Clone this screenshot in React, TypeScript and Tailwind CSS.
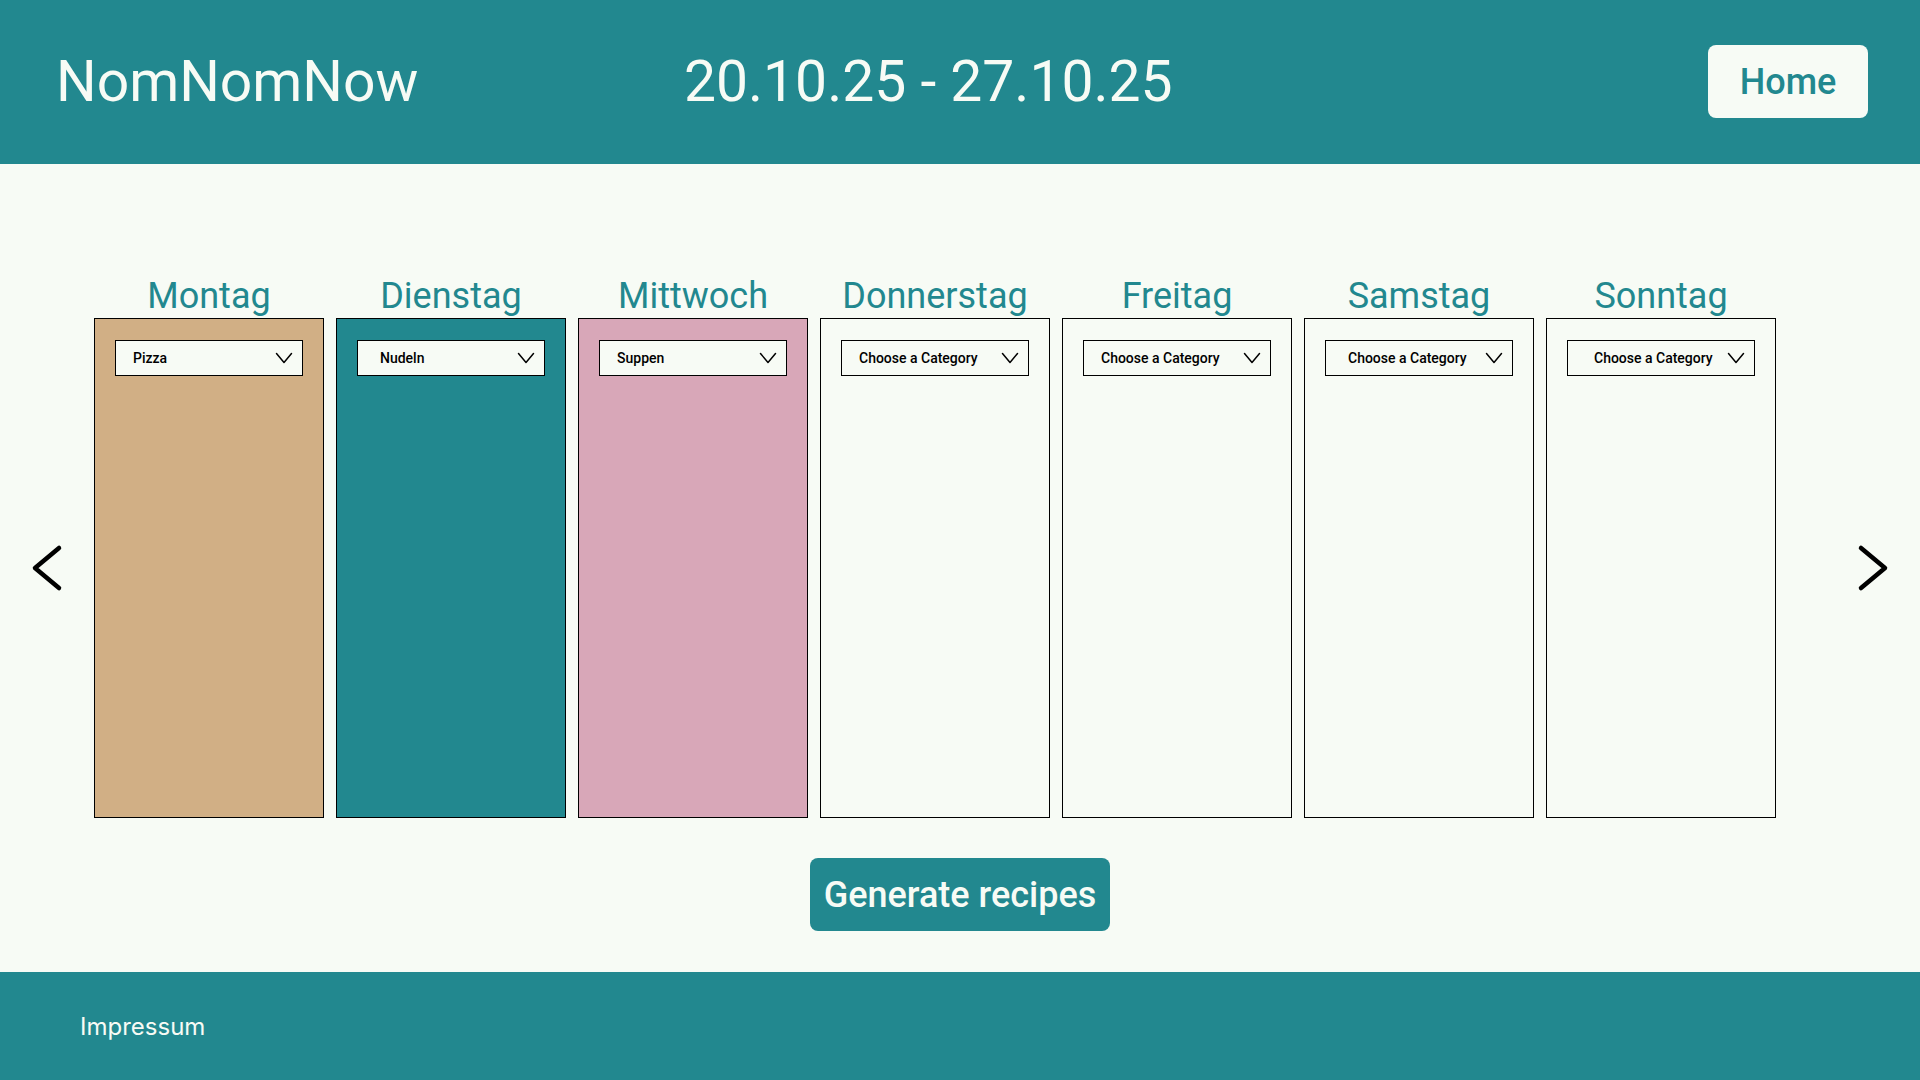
import React from "react";

type Day = {
  name: string;
  category: string;
  card: string;
  indent: string;
};

const PLACEHOLDER = "Choose a Category";
const CATEGORIES = [PLACEHOLDER, "Pizza", "Nudeln", "Suppen"];

const DAYS: Day[] = [
  { name: "Montag", category: "Pizza", card: "bg-[#d1af85]", indent: "pl-[17px]" },
  { name: "Dienstag", category: "Nudeln", card: "bg-[#22888f]", indent: "pl-[22px]" },
  { name: "Mittwoch", category: "Suppen", card: "bg-[#d8a7b8]", indent: "pl-[17px]" },
  { name: "Donnerstag", category: PLACEHOLDER, card: "bg-transparent", indent: "pl-[17px]" },
  { name: "Freitag", category: PLACEHOLDER, card: "bg-transparent", indent: "pl-[17px]" },
  { name: "Samstag", category: PLACEHOLDER, card: "bg-transparent", indent: "pl-[22px]" },
  { name: "Sonntag", category: PLACEHOLDER, card: "bg-transparent", indent: "pl-[26px]" },
];

function Arrow({ path }: { path: string }) {
  return (
    <svg className="overflow-visible" width="28" height="44" viewBox="0 0 28 44" fill="none" stroke="black" strokeWidth="4.5" strokeLinecap="round" strokeLinejoin="round" aria-hidden="true">
      <path d={path} />
    </svg>
  );
}

function DayColumn({ day }: { day: Day }) {
  const id = `category-${day.name.toLowerCase()}`;
  return (
    <div className="flex min-w-0 flex-1 flex-col">
      <label htmlFor={id} className="text-center text-4xl leading-[44px] text-[#22888f]">
        {day.name}
      </label>
      <div className={`flex-1 border border-black px-5 pt-[21px] ${day.card}`}>
        <div className="relative">
          <select
            id={id}
            defaultValue={day.category}
            className={`block h-9 w-full appearance-none border border-black bg-[#f7fbf5] pr-8 text-sm font-medium text-black ${day.indent}`}
          >
            {CATEGORIES.map((category) => (
              <option key={category}>{category}</option>
            ))}
          </select>
          <svg className="pointer-events-none absolute top-3 right-2.5" width="18" height="12" viewBox="0 0 18 12" fill="none" stroke="black" strokeWidth="1.5" strokeLinecap="round" strokeLinejoin="round" aria-hidden="true">
            <path d="M1.5 1.5 9 10.5 16.5 1.5" />
          </svg>
        </div>
      </div>
    </div>
  );
}

export default function App() {
  return (
    <div className="flex min-h-screen flex-col bg-[#f7fbf5] font-['Roboto',sans-serif]">
      <header className="flex h-[164px] items-center gap-6 bg-[#22888f] pr-[52px] pb-px pl-14 text-[#f7fbf5]">
        <h1 className="shrink-0 basis-1/3 text-[57px] leading-[64px]">NomNomNow</h1>
        <p className="text-[57px] leading-[64px] whitespace-nowrap">20.10.25 - 27.10.25</p>
        <button type="button" className="ml-auto h-[73px] w-40 rounded-lg bg-[#f7fbf5] text-4xl font-medium text-[#22888f]">
          Home
        </button>
      </header>

      <main className="flex flex-1 flex-col pt-[110px] pb-[41px]">
        <section className="flex flex-1">
          <button type="button" aria-label="Previous week" className="mt-11 flex w-[94px] shrink-0 items-center pl-[33px]">
            <Arrow path="M26 2 2 22 26 42" />
          </button>
          <div className="flex min-w-0 flex-1 gap-3">
            {DAYS.map((day) => (
              <DayColumn key={day.name} day={day} />
            ))}
          </div>
          <button type="button" aria-label="Next week" className="mt-11 flex w-36 shrink-0 items-center justify-end pr-[33px]">
            <Arrow path="M2 2 26 22 2 42" />
          </button>
        </section>
        <button type="button" className="mt-10 h-[73px] w-[300px] self-center rounded-lg bg-[#22888f] text-4xl font-medium text-[#f7fbf5]">
          Generate recipes
        </button>
      </main>

      <footer className="flex h-[108px] items-center bg-[#22888f] px-20 pt-0.5">
        <a href="#impressum" className="font-['Inter',sans-serif] text-2xl text-[#f7fbf5]">
          Impressum
        </a>
      </footer>
    </div>
  );
}
